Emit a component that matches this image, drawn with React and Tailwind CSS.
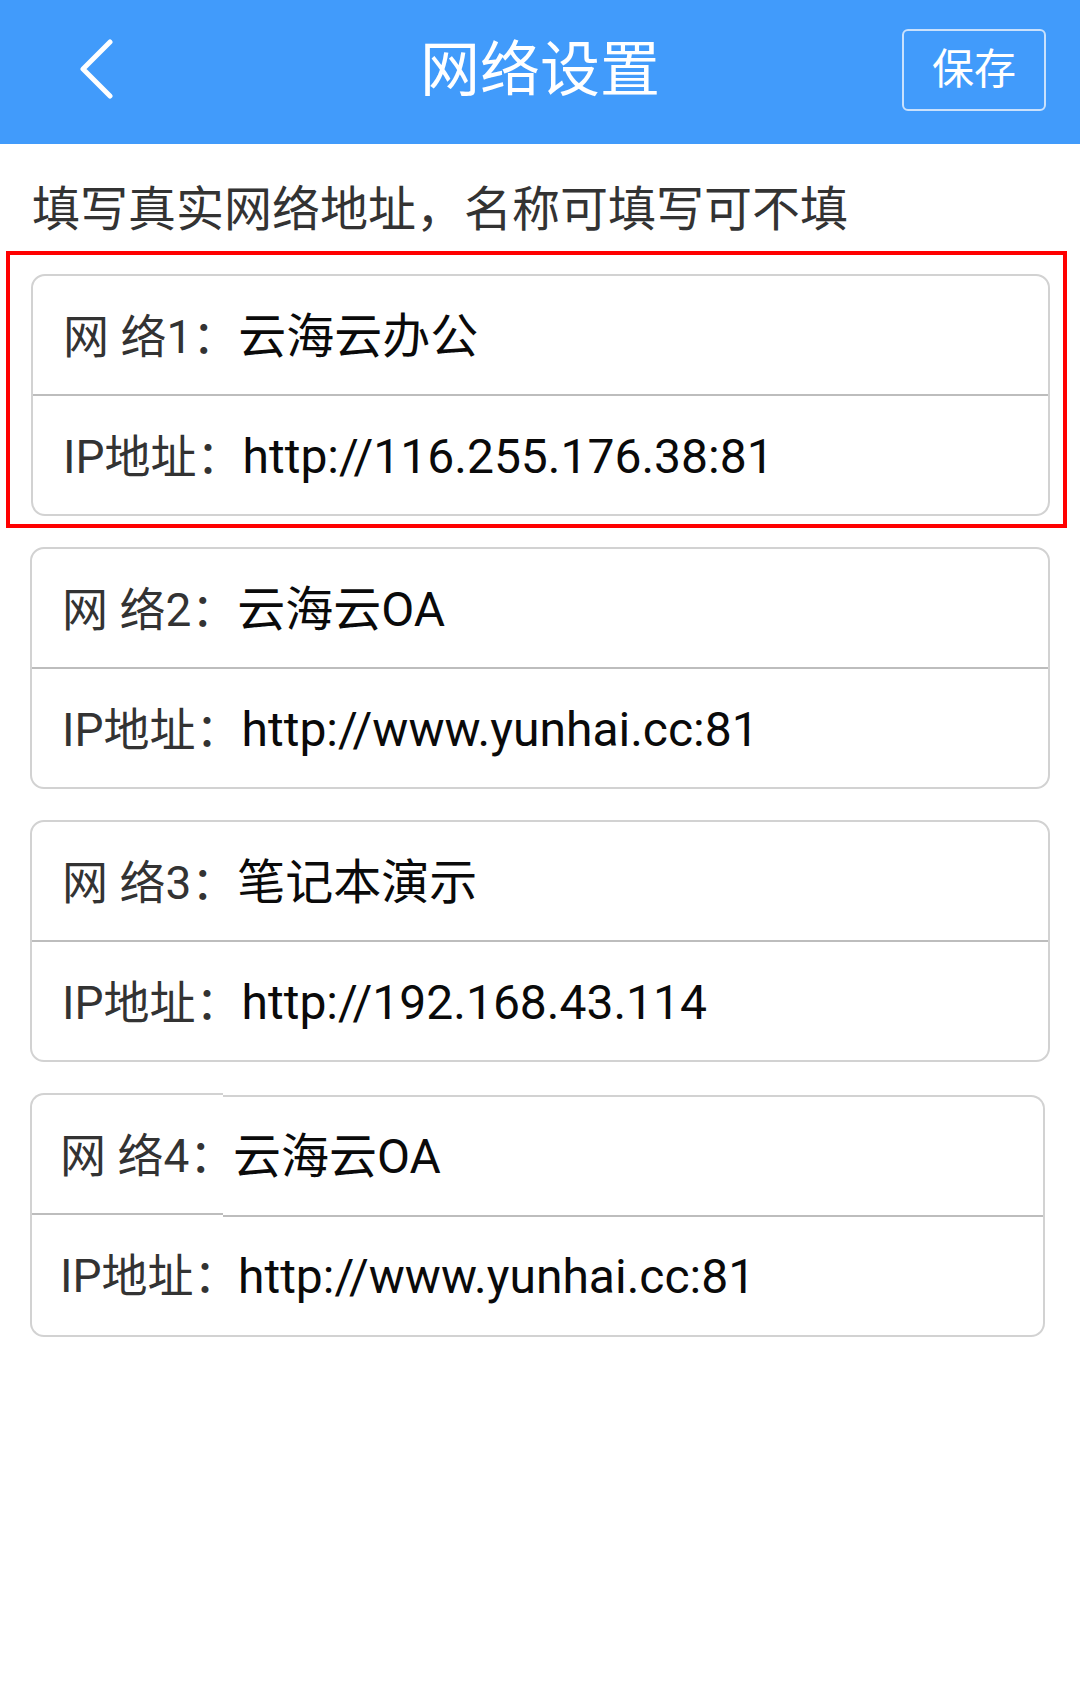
import React from "react";

const FONT = { fontFamily: 'Roboto, "Noto Sans CJK SC", sans-serif' };

function Row({ label, value, divider }) {
  return (
    <div
      className={
        "flex items-center pl-[30px] pt-[3px] leading-none " +
        (divider ? "h-[120px] border-b-2 border-[#bdbdbd]" : "h-[118px]")
      }
    >
      <span className="text-[46px] text-[#333333] whitespace-pre">{label}</span>
      <span className="text-[48px] text-[#0a0a0a] whitespace-pre">{value}</span>
    </div>
  );
}

function Card({ n, name, ip }) {
  return (
    <div className="rounded-[14px] border-2 border-[#d2d2d2] bg-white overflow-hidden">
      <Row label={`网 络${n}：`} value={name} divider />
      <Row label="IP地址：" value={ip} />
    </div>
  );
}

function SplitCard({ n, name, ip }) {
  return (
    <div className="mr-[5px] flex">
      <div className="w-[193px] shrink-0 rounded-l-[14px] border-y-2 border-l-2 border-[#d2d2d2] bg-white">
        <div className="flex h-[120px] items-center border-b-2 border-[#bdbdbd] pl-[28px] pt-[3px] text-[46px] leading-none text-[#333333] whitespace-pre">
          {`网 络${n}：`}
        </div>
        <div className="flex h-[118px] items-center pl-[28px] pt-[3px] text-[46px] leading-none text-[#333333] whitespace-pre">
          IP地址：
        </div>
      </div>
      <div className="mt-[2px] flex-1 rounded-r-[14px] border-y-2 border-r-2 border-[#d2d2d2] bg-white">
        <div className="flex h-[120px] items-center border-b-2 border-[#bdbdbd] pl-[10px] pt-[1px] text-[48px] leading-none text-[#0a0a0a] whitespace-pre">
          {name}
        </div>
        <div className="flex h-[118px] items-center pl-[15px] pt-[1px] text-[48px] leading-none text-[#0a0a0a] whitespace-pre">
          {ip}
        </div>
      </div>
    </div>
  );
}

export default function App() {
  return (
    <div className="w-[1080px] min-h-[1692px] bg-white" style={FONT}>
      <header className="grid h-[144px] grid-cols-[1fr_auto_1fr] items-center bg-[#419bfb]">
        <div className="flex items-center pl-[77px] pb-[6px]">
          <svg width="38" height="60" viewBox="0 0 38 60" fill="none">
            <path d="M33 3 L6 30 L33 57" stroke="white" strokeWidth="5" strokeLinecap="round" strokeLinejoin="round" />
          </svg>
        </div>
        <h1 className="text-[60px] font-normal leading-none text-white pb-[2px]">网络设置</h1>
        <div className="flex justify-end pr-[34px] pb-[4px]">
          <div className="flex h-[82px] w-[144px] items-center justify-center rounded-[6px] border-2 border-[#c9e1fc] text-[42px] leading-none text-white">
            保存
          </div>
        </div>
      </header>

      <p className="mt-[42px] pl-[32px] text-[48px] leading-[48px] text-[#333333]">
        填写真实网络地址，名称可填写可不填
      </p>

      <div className="mt-[17px] ml-[6px] mr-[13px] border-[4px] border-[#ff0000] pt-[19px] pb-[8px] pl-[21px] pr-[13px]">
        <Card n={1} name="云海云办公" ip="http://116.255.176.38:81" />
      </div>

      <div className="mt-[19px] flex flex-col gap-[31px] px-[30px]">
        <Card n={2} name="云海云OA" ip="http://www.yunhai.cc:81" />
        <Card n={3} name="笔记本演示" ip="http://192.168.43.114" />
        <SplitCard n={4} name="云海云OA" ip="http://www.yunhai.cc:81" />
      </div>
    </div>
  );
}
